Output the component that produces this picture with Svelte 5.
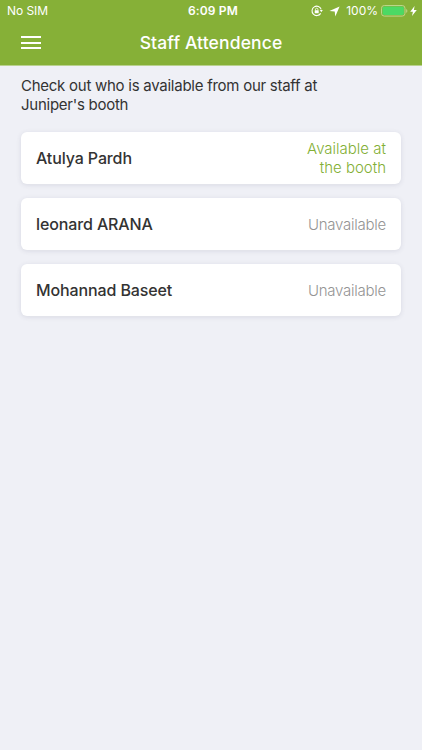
<script>
	let title = "Staff Attendence";
	let staff = [
		{ name: "Atulya Pardh", available: true },
		{ name: "leonard ARANA", available: false },
		{ name: "Mohannad Baseet", available: false }
	];
</script>

<div class="app">
	<header>
		<div class="status-bar">
			<span class="carrier">No SIM</span>
			<span class="time">6:09 PM</span>
			<div class="indicators">
				<svg class="lock" width="12" height="12" viewBox="0 0 12 12">
					<path d="M9.7 8.4A4.7 4.7 0 1 1 10.2 4.4" fill="none" stroke="#fff" stroke-width="1.1" />
					<path d="M8.7 5.1h3.1l-1.5 2.2z" fill="#fff" />
					<rect x="3.7" y="5.2" width="4" height="3.1" rx=".4" fill="#fff" />
					<path d="M4.5 5.3V4.4a1.2 1.2 0 0 1 2.4 0v.9" fill="none" stroke="#fff" stroke-width=".8" />
				</svg>
				<svg class="location" width="11" height="11" viewBox="0 0 11 11">
					<path d="M10.6.4 6.3 10.6 5.7 5.5.4 5z" fill="#fff" />
				</svg>
				<span class="percent">100%</span>
				<svg class="battery" width="27" height="12" viewBox="0 0 27 12">
					<rect x=".5" y=".5" width="23.5" height="10.6" rx="2.8" fill="none" stroke="#bcd58a" />
					<rect x="1.6" y="1.6" width="21.3" height="8.4" rx="1.7" fill="#4cd964" />
					<path d="M25.2 4v3.8q1.2-.5 1.2-1.9T25.2 4z" fill="#bcd58a" />
				</svg>
				<svg class="bolt" width="7" height="10" viewBox="0 0 7 10">
					<path d="M4.6 0 .2 5.7h2.7L2 10 6.8 4H3.9z" fill="#fff" />
				</svg>
			</div>
		</div>
		<div class="nav-bar">
			<button class="menu" aria-label="Menu">
				<span></span>
				<span></span>
				<span></span>
			</button>
			<h1>{title}</h1>
		</div>
	</header>

	<main>
		<p class="intro">Check out who is available from our staff at<br />Juniper's booth</p>
		<ul>
			{#each staff as person}
				<li>
					<span class="name">{person.name}</span>
					{#if person.available}
						<span class="state available">Available at<br />the booth</span>
					{:else}
						<span class="state">Unavailable</span>
					{/if}
				</li>
			{/each}
		</ul>
	</main>
</div>

<style>
	:global(body) {
		background: #eff0f6;
	}
	.app {
		min-height: 750px;
		background: #eff0f6;
		font-family: Inter, "Open Sans", sans-serif;
		color: #333;
	}
	header {
		box-sizing: border-box;
		height: 66px;
		background: #86b037;
		border-bottom: 1px solid #b9d18e;
		color: #fff;
	}
	.status-bar {
		display: grid;
		grid-template-columns: 1fr auto 1fr;
		align-items: center;
		height: 22px;
		padding: 0 5px 0 7px;
		font-size: 12px;
		line-height: 22px;
	}
	.carrier {
		letter-spacing: -0.05px;
	}
	.time {
		padding-left: 2px;
		font-weight: 600;
		letter-spacing: 0.15px;
	}
	.indicators {
		display: flex;
		justify-content: flex-end;
		align-items: center;
	}
	.location {
		margin-left: 6px;
	}
	.percent {
		margin-left: 6px;
	}
	.battery {
		margin-left: 3px;
	}
	.bolt {
		margin-left: 2px;
	}
	.nav-bar {
		display: grid;
		grid-template-columns: 60px 1fr 60px;
		height: 43px;
	}
	.menu {
		display: flex;
		flex-direction: column;
		justify-content: flex-start;
		gap: 3.5px;
		margin: 0;
		padding: 14px 19px 0 21px;
		border: none;
		background: none;
	}
	.menu span {
		width: 20px;
		height: 2px;
		background: #fff;
	}
	h1 {
		margin: 0;
		text-align: center;
		font-size: 17.5px;
		font-weight: 500;
		line-height: 42px;
		letter-spacing: 0.13px;
	}
	main {
		padding: 10px 21px 0;
	}
	.intro {
		margin: 0;
		font-size: 15px;
		line-height: 19px;
		letter-spacing: -0.26px;
	}
	ul {
		display: flex;
		flex-direction: column;
		gap: 14px;
		margin: 18px 0 0;
		padding: 0;
		list-style: none;
	}
	li {
		display: flex;
		justify-content: space-between;
		align-items: center;
		box-sizing: border-box;
		height: 52px;
		padding: 0 15px;
		border-radius: 6px;
		background: #fff;
		box-shadow: 0 1px 5px rgba(60, 60, 90, 0.12);
	}
	.name {
		padding-bottom: 1px;
		font-size: 16px;
		font-weight: 500;
		letter-spacing: -0.12px;
	}
	.state {
		color: #949494;
		font-size: 15px;
		font-weight: 300;
		line-height: 19px;
		letter-spacing: -0.25px;
		text-align: right;
	}
	.available {
		color: #83af35;
		letter-spacing: 0;
	}
</style>
